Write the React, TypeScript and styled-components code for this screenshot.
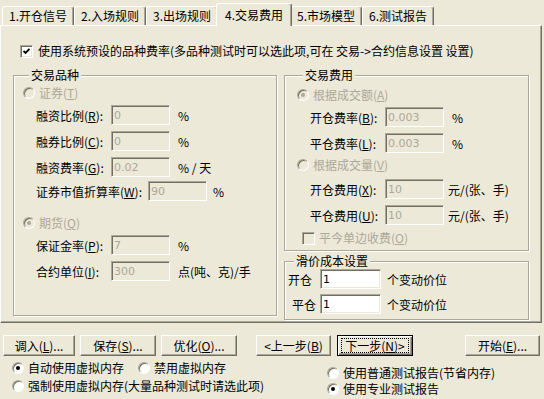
import React from "react";
import styled, { createGlobalStyle, css } from "styled-components";

const FACE = "#ece9d8";
const SHADOW = "#aca899";
const DARK = "#716f64";

const GlobalStyle = createGlobalStyle`
  html, body { margin: 0; padding: 0; background: ${FACE}; }
  body {
    font-family: "Noto Sans CJK SC", "Liberation Sans", sans-serif;
    font-size: 12px;
    color: #000;
  }
`;

const Window = styled.div`
  width: 544px;
  height: 399px;
  background: ${FACE};
  overflow: hidden;
`;

const TabStrip = styled.div`
  display: flex;
  align-items: flex-end;
  height: 25px;
  padding-left: 2px;
`;

const Tab = styled.div<{ $active?: boolean }>`
  box-sizing: border-box;
  height: 19px;
  padding: 1px 6px 0;
  line-height: 16px;
  white-space: nowrap;
  background: ${FACE};
  border: 1px solid #fff;
  border-bottom: 0;
  border-right-color: ${DARK};
  box-shadow: inset -1px 0 0 ${SHADOW};
  border-radius: 3px 3px 0 0;
  ${(p) =>
    p.$active &&
    css`
      height: 23px;
      margin: 0 -2px -1px;
      padding: 3px 8px 0;
      position: relative;
      z-index: 1;
    `}
`;

const Panel = styled.div`
  box-sizing: border-box;
  height: 298px;
  margin-right: 2px;
  padding: 18px 0 0 12px;
  border: 1px solid;
  border-color: #fff ${DARK} ${DARK} #fff;
  box-shadow: inset -1px -1px 0 ${SHADOW};
`;

const OptionRow = styled.div<{ $mt?: number; $indent?: number; $disabled?: boolean }>`
  display: flex;
  align-items: center;
  gap: 4px;
  height: 14px;
  line-height: 14px;
  white-space: nowrap;
  margin-top: ${(p) => p.$mt ?? 0}px;
  padding-left: ${(p) => p.$indent ?? 0}px;
  color: ${(p) => (p.$disabled ? SHADOW : "#000")};
`;

const RadioCircle = styled.span<{ $checked?: boolean; $disabled?: boolean }>`
  flex: none;
  box-sizing: border-box;
  width: 12px;
  height: 12px;
  border-radius: 50%;
  border: 1px solid;
  border-color: ${SHADOW} #fff #fff ${SHADOW};
  box-shadow: inset 1px 1px 0 ${DARK};
  background: ${(p) => (p.$disabled ? FACE : "#fff")};
  display: inline-flex;
  align-items: center;
  justify-content: center;
  &::after {
    content: "";
    display: ${(p) => (p.$checked ? "block" : "none")};
    width: 4px;
    height: 4px;
    border-radius: 50%;
    background: ${(p) => (p.$disabled ? SHADOW : "#000")};
  }
`;

const CheckBox = styled.span<{ $disabled?: boolean }>`
  flex: none;
  box-sizing: border-box;
  width: 13px;
  height: 13px;
  border: 1px solid;
  border-color: ${SHADOW} #fff #fff ${SHADOW};
  box-shadow: inset 1px 1px 0 ${DARK}, inset -1px -1px 0 ${FACE};
  background: ${(p) => (p.$disabled ? FACE : "#fff")};
  display: inline-flex;
  align-items: center;
  justify-content: center;
`;

const Columns = styled.div`
  display: flex;
  margin-top: 10px;
`;

const RightCol = styled.div`
  display: flex;
  flex-direction: column;
  gap: 3px;
  margin-left: 7px;
`;

const Group = styled.fieldset<{ $w: number; $h: number; $pl: number }>`
  box-sizing: border-box;
  width: ${(p) => p.$w}px;
  height: ${(p) => p.$h}px;
  min-inline-size: 0;
  margin: 0;
  padding: 0 0 0 ${(p) => p.$pl}px;
  border: 1px solid ${SHADOW};
  box-shadow: 1px 1px 0 #fff, inset 1px 1px 0 #fff;
`;

const Legend = styled.legend`
  height: 14px;
  line-height: 14px;
  padding: 0 2px;
  margin-left: 6px;
  background: ${FACE};
`;

const FieldRow = styled.div<{ $mt: number; $indent?: number }>`
  display: flex;
  align-items: center;
  height: 20px;
  margin-top: ${(p) => p.$mt}px;
  padding-left: ${(p) => p.$indent ?? 0}px;
  white-space: nowrap;
`;

const FieldLabel = styled.span<{ $w: number }>`
  flex: none;
  width: ${(p) => p.$w}px;
`;

const TextBox = styled.input<{ $w?: number; $off?: boolean }>`
  flex: none;
  box-sizing: border-box;
  width: ${(p) => p.$w ?? 59}px;
  height: 20px;
  margin: 0;
  padding: 0 2px;
  font: inherit;
  font-family: "DejaVu Sans", sans-serif;
  font-size: 11px;
  outline: none;
  border: 1px solid;
  border-color: ${SHADOW} #fff #fff ${SHADOW};
  box-shadow: inset 1px 1px 0 ${DARK}, inset -1px -1px 0 ${FACE};
  background: ${(p) => (p.$off ? FACE : "#fff")};
  color: ${(p) => (p.$off ? SHADOW : "#000")};
`;

const Unit = styled.span<{ $ml?: number }>`
  margin-left: ${(p) => p.$ml ?? 8}px;
`;

const Footer = styled.div`
  padding-top: 12px;
`;

const ButtonRow = styled.div`
  display: flex;
  height: 21px;
`;

const Button = styled.button<{ $w: number; $ml: number; $default?: boolean }>`
  box-sizing: border-box;
  width: ${(p) => p.$w}px;
  height: 21px;
  margin: 0 0 0 ${(p) => p.$ml}px;
  padding: 0;
  font: inherit;
  color: #000;
  background: ${FACE};
  white-space: nowrap;
  border: 1px solid;
  border-color: #fff ${DARK} ${DARK} #fff;
  box-shadow: inset -1px -1px 0 ${SHADOW};
  display: flex;
  align-items: center;
  justify-content: center;
  ${(p) =>
    p.$default &&
    css`
      border-color: #000;
      box-shadow: inset 1px 1px 0 #fff, inset -1px -1px 0 ${DARK}, inset -2px -2px 0 ${SHADOW};
    `}
`;

const FocusRing = styled.span`
  border: 1px dotted #000;
  padding: 0 3px;
  line-height: 13px;
`;

const OptionArea = styled.div`
  display: flex;
`;

const OptionCol = styled.div<{ $w?: number; $pt: number; $gap: number; $pl: number }>`
  display: flex;
  flex-direction: column;
  gap: ${(p) => p.$gap}px;
  width: ${(p) => (p.$w ? `${p.$w}px` : "auto")};
  padding: ${(p) => p.$pt}px 0 0 ${(p) => p.$pl}px;
`;

const InlineOptions = styled.div`
  display: flex;
  gap: 14px;
`;

const CheckMark = () => (
  <svg width="7" height="7" viewBox="0 0 7 7">
    <polyline points="0.5,3 2.5,5 6.5,1" fill="none" stroke="#000" strokeWidth="1.8" />
  </svg>
);

const Radio = ({
  label,
  checked,
  disabled,
  mt,
}: {
  label: React.ReactNode;
  checked?: boolean;
  disabled?: boolean;
  mt?: number;
}) => (
  <OptionRow $mt={mt} $disabled={disabled}>
    <RadioCircle $checked={checked} $disabled={disabled} />
    <span>{label}</span>
  </OptionRow>
);

const Input = ({
  label,
  labelWidth,
  value,
  unit,
  unitGap,
  mt,
  indent,
  width,
  off = true,
}: {
  label: React.ReactNode;
  labelWidth: number;
  value: string;
  unit: string;
  unitGap?: number;
  mt: number;
  indent?: number;
  width?: number;
  off?: boolean;
}) => (
  <FieldRow $mt={mt} $indent={indent}>
    <FieldLabel $w={labelWidth}>{label}</FieldLabel>
    <TextBox $w={width} $off={off} defaultValue={value} readOnly />
    <Unit $ml={unitGap}>{unit}</Unit>
  </FieldRow>
);

const tabs = ["1.开仓信号", "2.入场规则", "3.出场规则", "4.交易费用", "5.市场模型", "6.测试报告"];

export default function App() {
  return (
    <Window>
      <GlobalStyle />
      <TabStrip>
        {tabs.map((t, i) => (
          <Tab key={t} $active={i === 3}>
            {t}
          </Tab>
        ))}
      </TabStrip>
      <Panel>
        <OptionRow $indent={7} style={{ gap: 5 }}>
          <CheckBox>
            <CheckMark />
          </CheckBox>
          <span>使用系统预设的品种费率(多品种测试时可以选此项,可在 交易-&gt;合约信息设置 设置)</span>
        </OptionRow>
        <Columns>
          <Group $w={264} $h={248} $pl={9}>
            <Legend>交易品种</Legend>
            <Radio mt={4} disabled label={<>证券(<u>T</u>)</>} />
            <Input mt={5} indent={13} labelWidth={75} label={<>融资比例(<u>R</u>):</>} value="0" unit="%" />
            <Input mt={6} indent={13} labelWidth={75} label={<>融券比例(<u>C</u>):</>} value="0" unit="%" />
            <Input mt={6} indent={13} labelWidth={75} label={<>融资费率(<u>G</u>):</>} value="0.02" unit="% / 天" />
            <Input mt={4} indent={13} labelWidth={112} label={<>证券市值折算率(<u>W</u>):</>} value="90" unit="%" unitGap={6} />
            <Radio mt={15} disabled checked label={<>期货(<u>Q</u>)</>} />
            <Input mt={5} indent={13} labelWidth={75} label={<>保证金率(<u>P</u>):</>} value="7" unit="%" />
            <Input mt={6} indent={13} labelWidth={75} label={<>合约单位(<u>I</u>):</>} value="300" unit="点(吨、克)/手" />
          </Group>
          <RightCol>
            <Group $w={245} $h={183} $pl={12}>
              <Legend>交易费用</Legend>
              <Radio mt={6} disabled checked label={<>根据成交额(<u>A</u>)</>} />
              <Input mt={5} indent={13} labelWidth={75} label={<>开仓费率(<u>B</u>):</>} value="0.003" unit="%" />
              <Input mt={6} indent={13} labelWidth={75} label={<>平仓费率(<u>L</u>):</>} value="0.003" unit="%" />
              <Radio mt={5} disabled label={<>根据成交量(<u>V</u>)</>} />
              <Input mt={7} indent={13} labelWidth={75} label={<>开仓费用(<u>X</u>):</>} value="10" unit="元/(张、手)" unitGap={4} />
              <Input mt={6} indent={13} labelWidth={75} label={<>平仓费用(<u>U</u>):</>} value="10" unit="元/(张、手)" unitGap={4} />
              <OptionRow $mt={6} $indent={5} $disabled>
                <CheckBox $disabled />
                <span>平今单边收费(<u>O</u>)</span>
              </OptionRow>
            </Group>
            <Group $w={245} $h={66} $pl={3}>
              <Legend>滑价成本设置</Legend>
              <Input mt={1} labelWidth={32} label="开仓" value="1" unit="个变动价位" width={61} unitGap={6} off={false} />
              <Input mt={5} indent={4} labelWidth={28} label="平仓" value="1" unit="个变动价位" width={61} unitGap={6} off={false} />
            </Group>
          </RightCol>
        </Columns>
      </Panel>
      <Footer>
        <ButtonRow>
          <Button $w={72} $ml={3}>调入(<u>L</u>)...</Button>
          <Button $w={76} $ml={5}>保存(<u>S</u>)...</Button>
          <Button $w={76} $ml={5}>优化(<u>O</u>)...</Button>
          <Button $w={75} $ml={19}>&lt;上一步(<u>B</u>)</Button>
          <Button $w={76} $ml={6} $default>
            <FocusRing>下一步(<u>N</u>)&gt;</FocusRing>
          </Button>
          <Button $w={75} $ml={52}>开始(<u>E</u>)...</Button>
        </ButtonRow>
        <OptionArea>
          <OptionCol $w={315} $pt={5} $gap={4} $pl={12}>
            <InlineOptions>
              <Radio checked label="自动使用虚拟内存" />
              <Radio label="禁用虚拟内存" />
            </InlineOptions>
            <Radio label="强制使用虚拟内存(大量品种测试时请选此项)" />
          </OptionCol>
          <OptionCol $pt={10} $gap={2} $pl={0}>
            <Radio label="使用普通测试报告(节省内存)" />
            <Radio checked label="使用专业测试报告" />
          </OptionCol>
        </OptionArea>
      </Footer>
    </Window>
  );
}
